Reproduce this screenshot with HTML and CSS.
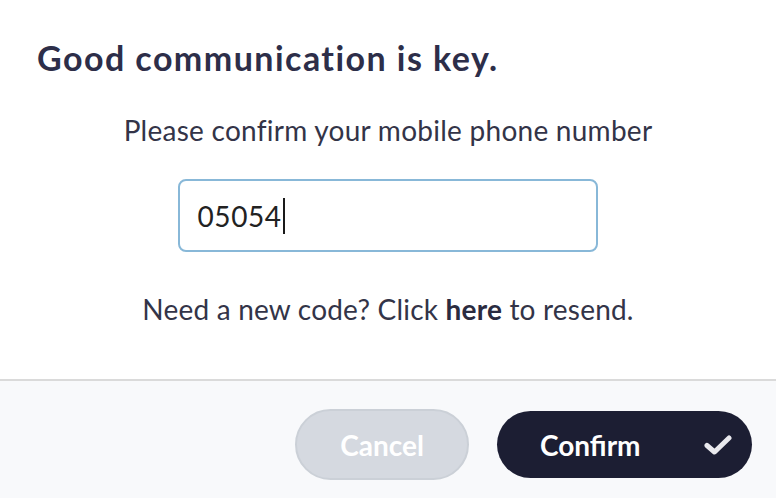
FILE: index.html
```html
<!DOCTYPE html>
<html lang="en">
<head>
<meta charset="utf-8">
<title>Good communication is key.</title>
<link rel="stylesheet" href="styles.css">
</head>
<body>
<div class="modal">
  <div class="modal-body">
    <h1 class="title">Good communication is key.</h1>
    <p class="subtitle">Please confirm your mobile phone number</p>
    <div class="field">
      <div class="input"><span class="value">05054</span><span class="caret"></span></div>
    </div>
    <p class="resend">Need a new code? Click <strong>here</strong> to resend.</p>
  </div>
  <div class="modal-footer">
    <button class="btn btn-cancel" type="button">Cancel</button>
    <button class="btn btn-confirm" type="button">
      <span>Confirm</span>
      <svg class="check" width="28" height="20" viewBox="0 0 28 20" aria-hidden="true"><path d="M3 10.5 L10.5 17 L25 3" fill="none" stroke="#e9e9ee" stroke-width="5" stroke-linecap="round" stroke-linejoin="round"/></svg>
    </button>
  </div>
</div>
</body>
</html>
```
FILE: styles.css
```css
html, body {
  margin: 0;
  padding: 0;
  background: #ffffff;
}
body {
  font-family: "Lato", "Liberation Sans", sans-serif;
  color: #333448;
}
.modal {
  width: 776px;
  height: 498px;
  display: flex;
  flex-direction: column;
}
.modal-body {
  height: 379px;
  box-sizing: border-box;
  padding: 38px 0 0 37px;
}
.title {
  margin: 0;
  font-size: 34px;
  line-height: 40px;
  font-weight: 700;
  letter-spacing: 1.45px;
  color: #2d2e49;
}
.subtitle {
  margin: 35px 0 0 -37px;
  font-size: 28px;
  line-height: 34px;
  letter-spacing: 0.26px;
  text-align: center;
}
.field {
  margin: 32px 0 0 -38px;
  display: flex;
  justify-content: center;
}
.input {
  width: 420px;
  height: 73px;
  box-sizing: border-box;
  border: 2px solid #88b8d8;
  border-radius: 8px;
  padding: 0 18px;
  display: flex;
  align-items: center;
  font-size: 28px;
  color: #222222;
}
.value {
  letter-spacing: 0.6px;
}
.caret {
  display: inline-block;
  width: 2px;
  height: 36px;
  margin-left: 1px;
  background: #1a1a1a;
}
.resend {
  margin: 40px 0 0 -37px;
  font-size: 28px;
  line-height: 34px;
  letter-spacing: 0.2px;
  text-align: center;
}
.resend strong {
  font-weight: 700;
  color: #2a2b40;
}
.modal-footer {
  flex: 1;
  border-top: 2px solid #dadada;
  background: #f8f9fb;
  display: flex;
  justify-content: flex-end;
  align-items: center;
  gap: 28px;
  padding: 10px 24px 0 0;
}
.btn {
  font-family: "Lato", "Liberation Sans", sans-serif;
  font-size: 28px;
  font-weight: 700;
  color: #ffffff;
  border-radius: 999px;
  box-sizing: border-box;
  cursor: pointer;
}
.btn-cancel {
  width: 174px;
  height: 71px;
  background: #d5d9e0;
  border: 2px solid #cbd0d7;
  padding: 0;
}
.btn-confirm {
  width: 255px;
  height: 67px;
  background: #1c1e33;
  border: 0;
  padding: 0 20px 0 43px;
  display: flex;
  align-items: center;
  justify-content: space-between;
}
.check {
  display: block;
}
```
